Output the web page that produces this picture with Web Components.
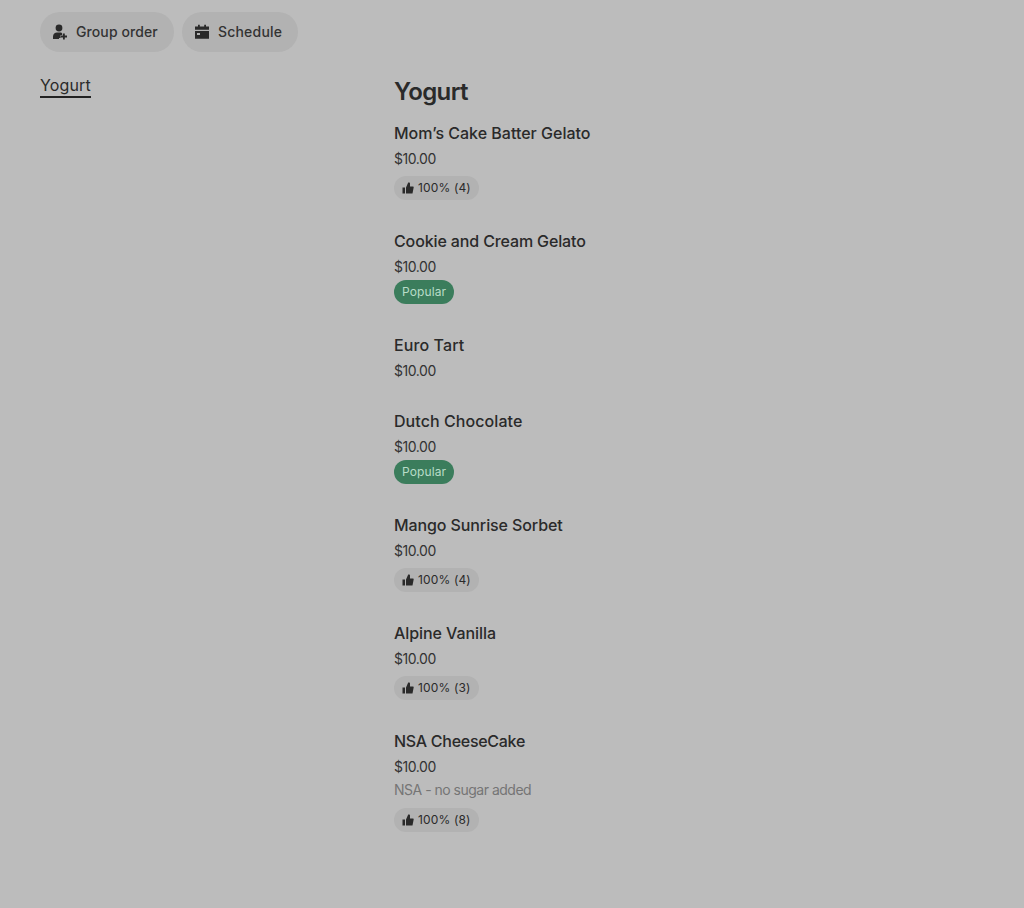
<!DOCTYPE html>
<html><head><meta charset="utf-8"><style>
html,body{margin:0;padding:0;background:#bcbcbc;height:100%}
body{font-family:Inter,"Liberation Sans",sans-serif;color:#2a2a2a}
</style></head><body>
<menu-page>
<action-bar slot="bar">
<pill-button label="Group order"><svg viewBox="0 0 16 16" width="16" height="16"><circle cx="7" cy="4" r="3.4" fill="#2a2a2a"/><path d="M1 15v-2.500C1 10 3 8.600 5 8.600h4.200l1 1V11H8.600v3H7v1z" fill="#2a2a2a"/><path d="M11 9.600h1.800v2H15v1.800h-2.200v2H11v-2H9v-1.800h2z" fill="#2a2a2a"/></svg></pill-button>
<pill-button label="Schedule" style="--ls:.22px"><svg viewBox="0 0 16 16" width="16" height="16"><path d="M4 .8h1.800v1.700h4.400V.8H12v1.700h3v3.300H1V2.500h3zM1 7h14v7.800H1zm2 2v2h3V9z" fill="#2a2a2a" fill-rule="evenodd"/></svg></pill-button>
</action-bar>
<div slot="side"><side-tab>Yogurt</side-tab></div>
<div slot="main">
<section-title>Yogurt</section-title>
<menu-item name="Mom’s Cake Batter Gelato"><rating-chip>100% (4)</rating-chip></menu-item>
<menu-item name="Cookie and Cream Gelato" style="--ls:-.13px"><popular-chip></popular-chip></menu-item>
<menu-item name="Euro Tart" style="--ls:.1px"></menu-item>
<menu-item name="Dutch Chocolate" style="--ls:.07px"><popular-chip></popular-chip></menu-item>
<menu-item name="Mango Sunrise Sorbet" style="--ls:-.1px"><rating-chip>100% (4)</rating-chip></menu-item>
<menu-item name="Alpine Vanilla" style="--ls:-.07px"><rating-chip>100% (3)</rating-chip></menu-item>
<menu-item name="NSA CheeseCake" note="NSA - no sugar added" style="--ls:-.28px"><rating-chip>100% (8)</rating-chip></menu-item>
</div>
</menu-page>
<script>
function def(name,html){customElements.define(name,class extends HTMLElement{
  constructor(){super();this.attachShadow({mode:'open'}).innerHTML=html;}
});}
def('menu-page',`<style>
:host{display:block;padding:12px 40px 0;box-sizing:border-box;min-height:908px}
.bar{display:block}
.cols{display:grid;grid-template-columns:354px 1fr;margin-top:24px}
</style><slot name="bar" class="bar"></slot><div class="cols"><slot name="side"></slot><slot name="main"></slot></div>`);
def('action-bar',`<style>:host{display:flex;gap:8px}</style><slot></slot>`);
customElements.define('pill-button',class extends HTMLElement{constructor(){super();const l=this.getAttribute('label');this.attachShadow({mode:'open'}).innerHTML=`<style>
:host{display:inline-flex;align-items:center;gap:8px;height:40px;padding:0 16px 0 12px;border-radius:20px;background:#b2b2b2;font:500 14px/16px Inter,sans-serif;letter-spacing:var(--ls,.1px);color:#333}
::slotted(svg){display:block}
</style><slot></slot><span>${l}</span>`}});
def('side-tab',`<style>:host{display:block;width:fit-content;font:400 16px/18px Inter,sans-serif;letter-spacing:.15px;color:#2a2a2a;border-bottom:2px solid #222;padding-bottom:2px}</style><slot></slot>`);
def('section-title',`<style>:host{display:block;font:600 24px/32px Inter,sans-serif;letter-spacing:-.6px;color:#2a2a2a;margin-bottom:14px}</style><slot></slot>`);
customElements.define('menu-item',class extends HTMLElement{constructor(){super();const n=this.getAttribute('name'),t=this.getAttribute('note');this.attachShadow({mode:'open'}).innerHTML=`<style>
:host{display:block;padding-bottom:30px}
.n{font:500 16px/22px Inter,sans-serif;letter-spacing:var(--ls,0);color:#2a2a2a}
.p{font:400 14px/20px Inter,sans-serif;letter-spacing:-.45px;color:#333;margin:5px 0 -1px}
.t{font:400 14px/20px Inter,sans-serif;letter-spacing:-.5px;color:#757575;margin-top:4px}
.c{display:flex}
</style><div class="n">${n}</div><div class="p">$10.00</div>${t?`<div class="t">${t}</div>`:''}<div class="c"><slot></slot></div>`}});
def('rating-chip',`<style>:host{display:inline-flex;align-items:center;gap:4px;height:24px;margin-top:8px;padding:0 8px;border-radius:12px;background:#b2b2b2;font:400 12px/16px Inter,sans-serif;letter-spacing:.15px;color:#2a2a2a}
svg{display:block}</style><svg viewBox="0 0 12 12" width="12" height="12"><path d="M.5 5.500h2.500V11.500H.5zM4 5.500 6.200.5h.8c.6 0 1 .5 1 1V4.500h3c.5 0 .8.4.7.8l-1.200 6.200H4z" fill="#2a2a2a"/></svg><slot></slot>`);
def('popular-chip',`<style>:host{display:inline-flex;align-items:center;height:24px;margin-top:4px;padding:0 8px;border-radius:12px;background:#3b7d5c;font:400 12px/16px Inter,sans-serif;letter-spacing:.1px;color:#b8dcc8}</style>Popular`);
</script>
</body></html>
